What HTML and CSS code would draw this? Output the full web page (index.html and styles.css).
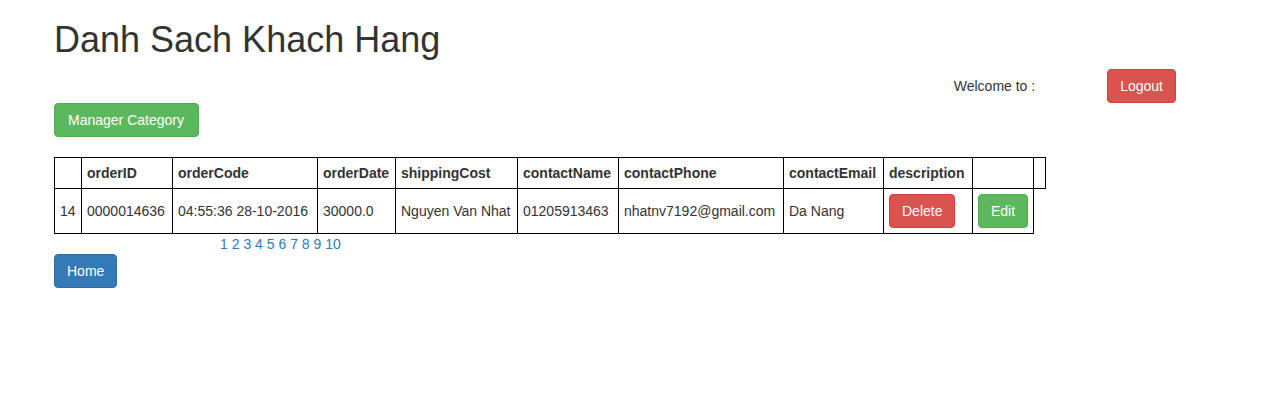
FILE: index.html
```html
<!DOCTYPE html>
<html>
<head>
<meta charset="utf-8">
<title>Danh Sach Khach Hang</title>
<link rel="stylesheet" href="styles.css">
</head>
<body>
<div class="page">
  <h1 class="title">Danh Sach Khach Hang</h1>
  <div class="userbar">
    <span class="welcome">Welcome to :</span>
    <a class="btn btn-danger" href="#">Logout</a>
  </div>
  <div class="actions">
    <a class="btn btn-success btn-wide" href="#">Manager Category</a>
  </div>
  <table class="orders">
    <colgroup>
      <col class="c-no">
      <col class="c-id">
      <col class="c-code">
      <col class="c-date">
      <col class="c-cost">
      <col class="c-name">
      <col class="c-phone">
      <col class="c-email">
      <col class="c-desc">
      <col class="c-edit">
      <col class="c-extra">
    </colgroup>
    <thead>
      <tr>
        <th></th>
        <th>orderID</th>
        <th>orderCode</th>
        <th>orderDate</th>
        <th>shippingCost</th>
        <th>contactName</th>
        <th>contactPhone</th>
        <th>contactEmail</th>
        <th>description</th>
        <th></th>
        <th></th>
      </tr>
    </thead>
    <tbody>
      <tr>
        <td>14</td>
        <td>0000014636</td>
        <td>04:55:36 28-10-2016</td>
        <td>30000.0</td>
        <td>Nguyen Van Nhat</td>
        <td>01205913463</td>
        <td>nhatnv7192@gmail.com</td>
        <td>Da Nang</td>
        <td><a class="btn btn-danger" href="#">Delete</a></td>
        <td><a class="btn btn-success" href="#">Edit</a></td>
      </tr>
    </tbody>
  </table>
  <div class="pager">
    <a href="#">1</a> <a href="#">2</a> <a href="#">3</a> <a href="#">4</a> <a href="#">5</a> <a href="#">6</a> <a href="#">7</a> <a href="#">8</a> <a href="#">9</a> <a href="#">10</a>
  </div>
  <a class="btn btn-primary" href="#">Home</a>
</div>
</body>
</html>
```
FILE: styles.css
```css
* { box-sizing: border-box; }
html, body { margin: 0; padding: 0; background: #fff; }
body {
  font-family: "Liberation Sans", Arial, Helvetica, sans-serif;
  font-size: 14px;
  line-height: 20px;
  color: #333;
}
.page {
  padding: 0 98px 0 54px;
}
.title {
  font-size: 36px;
  font-weight: 500;
  line-height: 39px;
  margin: 20px 0 10px;
}
.userbar {
  display: flex;
  justify-content: flex-end;
  align-items: center;
  height: 34px;
}
.welcome {
  margin-right: 72px;
}
.actions { margin-bottom: 20px; }
.btn {
  display: inline-block;
  padding: 6px 12px;
  font-size: 14px;
  line-height: 20px;
  border: 1px solid transparent;
  border-radius: 4px;
  color: #fff;
  text-decoration: none;
  white-space: nowrap;
  vertical-align: middle;
}
.btn-wide { padding: 6px 14px 6px 13px; }
.btn-danger { background: #d9534f; border-color: #d43f3a; }
.btn-success { background: #5cb85c; border-color: #4cae4c; }
.btn-primary { background: #337ab7; border-color: #2e6da4; }
.orders {
  border-collapse: collapse;
  border-spacing: 0;
  table-layout: fixed;
  width: 991px;
}
.c-no { width: 27px; }
.c-id { width: 91px; }
.c-code { width: 145px; }
.c-date { width: 78px; }
.c-cost { width: 122px; }
.c-name { width: 101px; }
.c-phone { width: 165px; }
.c-email { width: 100px; }
.c-desc { width: 89px; }
.c-edit { width: 61px; }
.c-extra { width: 12px; }
.orders th, .orders td {
  border: 1px solid #000;
  padding: 5px;
  white-space: nowrap;
  overflow: visible;
}
.orders th {
  text-align: left;
  font-weight: bold;
}
.orders td { vertical-align: middle; }
.pager {
  margin-left: 166px;
  line-height: 20px;
}
.pager a { color: #337ab7; text-decoration: none; }
```
